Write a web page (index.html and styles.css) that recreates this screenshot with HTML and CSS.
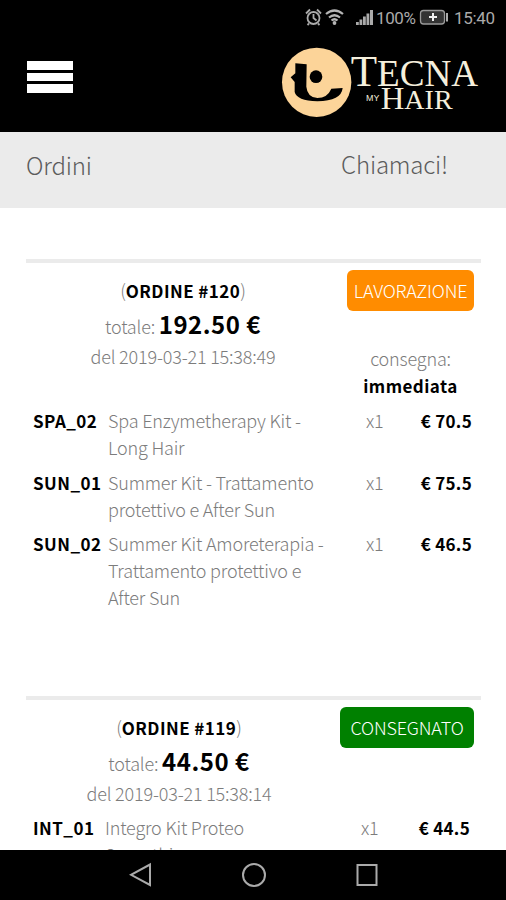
FILE: index.html
```html
<!DOCTYPE html>
<html lang="it">
  <head>
    <meta charset="utf-8">
    <title>Tecna My Hair - Ordini</title>
    <link rel="stylesheet" href="styles.css">
  </head>
  <body>
    <div class="status">
      <svg class="status-icons" width="194" height="24" viewBox="0 0 194 24">
        <!-- alarm -->
        <g fill="none" stroke="#aaa" stroke-width="1.8">
          <circle cx="11.500" cy="13" r="6"/>
          <path d="M4 8.500l4-4M19 8.500l-4-4M11.500 9v4l3 2.500M7 18.500l-1.500 1.500M16 18.500l1.500 1.500"/>
        </g>
        <!-- wifi -->
        <g fill="none" stroke="#b4b4b4" stroke-width="2.200">
          <path d="M24 9q8.500-7 17 0M27 12.500q5.500-4.500 11 0M29.500 15.500q3-2.500 6 0"/>
        </g>
        <circle cx="32.500" cy="18" r="1.900" fill="#b4b4b4"/>
        <!-- signal -->
        <path fill="#aaa" d="M54 17h2.800v3H54zM57.500 14.500h2.800V20h-2.800zM61 11.500h2.800V20H61zM64.500 8.500h2.800V20h-2.800zM68 5h3v15h-3z"/>
        <text class="status-text" x="74" y="18.500" textLength="40">100%</text>
        <!-- battery -->
        <rect x="118.500" y="5.500" width="24" height="13.500" rx="3" fill="#333" stroke="#999" stroke-width="1.300"/>
        <path d="M145 8v8.500" stroke="#aaa" stroke-width="2"/>
        <path d="M131 8v8M127 12h8" stroke="#eee" stroke-width="2"/>
        <text class="status-text" x="152" y="19" textLength="41">15:40</text>
      </svg>
    </div>

    <header class="header">
      <div class="menu">
        <span></span>
        <span></span>
        <span></span>
      </div>
      <svg class="logo" width="236" height="96" viewBox="0 0 708 288">
        <circle cx="140" cy="139" r="104" fill="#fcd499"/>
        <path d="M76 82L110 85L109 152Q112 184 142 186Q172 186 184 158L218 156Q214 195 142 196Q80 194 74 168L74 138L62 124L76 112Z"/>
        <circle cx="138" cy="122" r="19"/>
        <g class="logo-text">
          <text x="242" y="149" font-size="130" textLength="382" lengthAdjust="spacingAndGlyphs">T<tspan font-size="112">ECNA</tspan></text>
          <text x="332" y="220" font-size="96" textLength="216" lengthAdjust="spacingAndGlyphs">H<tspan font-size="82">AIR</tspan></text>
          <text class="logo-my" x="288" y="194" font-size="27" textLength="40" lengthAdjust="spacingAndGlyphs">MY</text>
        </g>
      </svg>
    </header>

    <div class="subbar">
      <span class="subbar-title">Ordini</span>
      <span class="subbar-call">Chiamaci!</span>
    </div>

    <main class="orders">
      <section class="order order-first">
        <div class="order-head">
          <div class="order-info">
            <p>(<b>ORDINE #120</b>)</p>
            <p class="total">totale: <strong>192.50 €</strong></p>
            <p class="date">del 2019-03-21 15:38:49</p>
          </div>
          <div class="order-state">
            <span class="badge badge-work">LAVORAZIONE</span>
            <p class="delivery">consegna:<br><b>immediata</b></p>
          </div>
        </div>
        <div class="item">
          <b>SPA_02</b>
          <span>Spa Enzymetherapy Kit -<br>Long Hair</span>
          <span>x1</span>
          <b class="price">€ 70.5</b>
        </div>
        <div class="item">
          <b>SUN_01</b>
          <span>Summer Kit - Trattamento<br>protettivo e After Sun</span>
          <span>x1</span>
          <b class="price">€ 75.5</b>
        </div>
        <div class="item">
          <b>SUN_02</b>
          <span>Summer Kit Amoreterapia -<br>Trattamento protettivo e<br>After Sun</span>
          <span>x1</span>
          <b class="price">€ 46.5</b>
        </div>
      </section>

      <section class="order order-second">
        <div class="order-head">
          <div class="order-info">
            <p>(<b>ORDINE #119</b>)</p>
            <p class="total">totale: <strong>44.50 €</strong></p>
            <p class="date">del 2019-03-21 15:38:14</p>
          </div>
          <div class="order-state">
            <span class="badge badge-done">CONSEGNATO</span>
          </div>
        </div>
        <div class="item">
          <b>INT_01</b>
          <span>Integro Kit Proteo<br>Smoothing</span>
          <span>x1</span>
          <b class="price">€ 44.5</b>
        </div>
      </section>
    </main>

    <nav class="navbar">
      <svg width="24" height="26" viewBox="0 0 24 26"><path d="M21 2.500v20.500L2 12.800z"/></svg>
      <svg width="26" height="26" viewBox="0 0 26 26"><circle cx="13" cy="13" r="11"/></svg>
      <svg width="24" height="26" viewBox="0 0 24 26"><rect x="2.500" y="3" width="19" height="20"/></svg>
    </nav>
  </body>
</html>
```
FILE: styles.css
```css
* {
  box-sizing: border-box;
}

body {
  margin: 0;
  height: 900px;
  display: flex;
  flex-direction: column;
  overflow: hidden;
  background: #fff;
  color: #7c7c7c;
  font-family: "Noto Sans CJK JP", "Noto Sans CJK SC", sans-serif;
  font-size: 18px;
  font-weight: 300;
  letter-spacing: -0.18px;
  line-height: 27px;
}

p {
  margin: 0;
}

b, strong {
  color: #000;
  font-weight: 700;
}

b {
  font-size: 17px;
  letter-spacing: 0.45px;
}

.status {
  flex: none;
  height: 36px;
  padding: 5px 10px 0 0;
  display: flex;
  justify-content: flex-end;
  background: #000;
}

.status-text {
  fill: #aaa;
  font-family: Roboto, sans-serif;
  font-size: 17px;
  font-weight: 400;
  letter-spacing: 0;
}

.header {
  flex: none;
  height: 96px;
  display: flex;
  justify-content: space-between;
  background: #000;
}

.menu {
  width: 46px;
  margin: 25px 0 0 27px;
  display: flex;
  flex-direction: column;
  gap: 3px;
}

.menu span {
  height: 8.500px;
  background: #fff;
}

.logo-text {
  fill: #f5efdc;
  font-family: "Liberation Serif", serif;
  font-weight: 400;
  letter-spacing: 0;
}

.logo-my {
  font-family: "Liberation Sans", sans-serif;
}

.subbar {
  flex: none;
  height: 76px;
  padding: 19px 58px 0 26px;
  display: flex;
  justify-content: space-between;
  background: #ebebeb;
  color: #5c5c5c;
  font-size: 24px;
  line-height: 28px;
}

.subbar-call {
  margin-top: -1px;
}

.orders {
  flex: 1;
  min-height: 0;
  padding: 51px 25px 0 26px;
  overflow: hidden;
}

.order {
  border-top: 4px solid #ebebeb;
  padding: 7px 7px 0;
}

.order-first {
  height: 437px;
}

.order-head {
  display: flex;
  justify-content: space-between;
}

.order-first .order-head {
  height: 137px;
}

.order-second .order-head {
  height: 107px;
}

.order-info {
  width: 300px;
  padding-top: 7px;
  text-align: center;
}

.order-second .order-info {
  width: 292px;
}

.total {
  height: 39px;
  line-height: 39px;
}

.total strong {
  font-size: 24px;
  letter-spacing: 0.5px;
}

.order-state {
  display: flex;
  flex-direction: column;
  align-items: flex-end;
}

.badge {
  height: 41px;
  border-radius: 6px;
  color: #fff;
  line-height: 41px;
  text-align: center;
}

.badge-work {
  width: 127px;
  background: #ff8c00;
}

.badge-done {
  width: 134px;
  background: #008000;
}

.delivery {
  width: 127px;
  margin-top: 34px;
  text-align: center;
}

.item {
  display: grid;
  grid-template-columns: 75px 258px 40px 1fr;
  margin-bottom: 7.500px;
  padding-right: 2px;
}

.order-second .item {
  grid-template-columns: 72px 256px 40px 1fr;
  padding-right: 4px;
}

.price {
  text-align: right;
  letter-spacing: 0.3px;
}

.navbar {
  flex: none;
  height: 50px;
  padding: 0 127px 0 129px;
  display: flex;
  align-items: center;
  justify-content: space-between;
  background: #000;
}

.navbar svg {
  fill: none;
  stroke: #aaa;
  stroke-width: 2;
}
```
